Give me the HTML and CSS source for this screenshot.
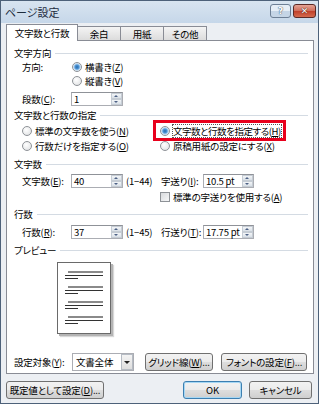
FILE: index.html
```html
<!DOCTYPE html>
<html>
<head>
    <meta charset="utf-8">
    <title>ページ設定</title>
    <link rel="stylesheet" href="styles.css">
</head>
<body>
<div class="window">
    <div class="titlebar">
        <span class="title">ページ設定</span>
        <div class="caption">
            <span class="cap help">?</span>
            <span class="cap close">✕</span>
        </div>
    </div>
    <div class="client">
        <div class="tabs">
            <span class="tab active">文字数と行数</span>
            <span class="tab">余白</span>
            <span class="tab">用紙</span>
            <span class="tab">その他</span>
        </div>
        <div class="panel">
            <div class="grp">文字方向</div>
            <div class="row">
                <span class="lbl">方向:</span>
                <span class="radio on"></span><span>横書き(<u>Z</u>)</span>
            </div>
            <div class="row">
                <span class="lbl"></span>
                <span class="radio"></span><span>縦書き(<u>V</u>)</span>
            </div>
            <div class="row r-cols">
                <span class="lbl">段数(<u>C</u>):</span>
                <span class="spin"><span class="val">1</span><span class="arrows"><i class="up"></i><i class="dn"></i></span></span>
            </div>

            <div class="grp g2">文字数と行数の指定</div>
            <div class="row r-radio1">
                <span class="col"><span class="radio"></span><span>標準の文字数を使う(<u>N</u>)</span></span>
                <span class="col"><span class="radio on"></span><span class="focus">文字数と行数を指定する(<u>H</u>)</span></span>
            </div>
            <div class="row r-radio2">
                <span class="col"><span class="radio"></span><span>行数だけを指定する(<u>O</u>)</span></span>
                <span class="col"><span class="radio"></span><span>原稿用紙の設定にする(<u>X</u>)</span></span>
            </div>
            <div class="mark"></div>

            <div class="grp g3">文字数</div>
            <div class="row r-num">
                <span class="lbl">文字数(<u>E</u>):</span>
                <span class="spin"><span class="val">40</span><span class="arrows"><i class="up"></i><i class="dn"></i></span></span>
                <span class="range">(1−44)</span>
                <span class="lbl2">字送り(<u>I</u>):</span>
                <span class="spin"><span class="val">10.5 pt</span><span class="arrows"><i class="up"></i><i class="dn"></i></span></span>
            </div>
            <div class="row r-check">
                <span class="check"></span><span>標準の字送りを使用する(<u>A</u>)</span>
            </div>

            <div class="grp g4">行数</div>
            <div class="row r-line">
                <span class="lbl">行数(<u>R</u>):</span>
                <span class="spin"><span class="val">37</span><span class="arrows"><i class="up"></i><i class="dn"></i></span></span>
                <span class="range">(1−45)</span>
                <span class="lbl2">行送り(<u>T</u>):</span>
                <span class="spin"><span class="val">17.75 pt</span><span class="arrows"><i class="up"></i><i class="dn"></i></span></span>
            </div>

            <div class="grp g5">プレビュー</div>
            <div class="preview">
                <div class="page">
                    <div class="para"><i class="l1"></i><i class="l2"></i><i class="l3"></i></div>
                    <div class="para"><i class="l1"></i><i class="l2"></i><i class="l3"></i></div>
                    <div class="para"><i class="l1"></i><i class="l2"></i><i class="l3"></i></div>
                    <div class="para"><i class="l1"></i><i class="l2"></i><i class="l3"></i></div>
                </div>
            </div>

            <div class="row r-target">
                <span class="lbl3">設定対象(<u>Y</u>):</span>
                <span class="combo"><span class="val">文書全体</span><span class="drop"></span></span>
                <span class="btn b-grid">グリッド線(<u>W</u>)...</span>
                <span class="btn b-font">フォントの設定(<u>F</u>)...</span>
            </div>
        </div>
        <div class="footer">
            <span class="btn b-default">既定値として設定(<u>D</u>)...</span>
            <span class="spacer"></span>
            <span class="btn b-ok">OK</span>
            <span class="btn b-cancel">キャンセル</span>
        </div>
    </div>
</div>
</body>
</html>
```

FILE: styles.css
```css
body {
    margin: 0;
    background: #ffffff;
    font-family: "Noto Sans CJK JP", "Liberation Sans", sans-serif;
    font-size: 9.5px;
    line-height: 12px;
    letter-spacing: -0.2px;
    font-feature-settings: "palt";
    white-space: nowrap;
    color: #000;
}

u {
    text-decoration: underline;
    text-underline-offset: 1px;
}

.window {
    width: 317px;
    height: 402px;
    border: 1px solid #4d6179;
    background: #e3eaf2;
    display: flex;
    flex-direction: column;
}

.titlebar {
    height: 22px;
    display: flex;
    align-items: center;
    padding-left: 4px;
    background: linear-gradient(#d8e4f0, #c6d7e9);
}

.title {
    font-size: 11px;
    letter-spacing: 0;
    color: #1c2b3d;
    flex: 1;
}

.caption {
    display: flex;
    gap: 2px;
    margin-right: 2px;
    align-self: flex-start;
    margin-top: 3px;
}

.cap {
    width: 21px;
    height: 14px;
    border: 1px solid #6d7f95;
    border-radius: 3px;
    display: flex;
    align-items: center;
    justify-content: center;
    font-family: "DejaVu Sans", sans-serif;
    font-size: 9px;
    font-weight: bold;
    box-sizing: border-box;
}

.help {
    background: linear-gradient(#e6eef6 50%, #c5d5e6 50%);
    color: #fff;
    text-shadow: 0 0 1px #3c4f66, 0 0 1px #3c4f66;
}

.close {
    width: 23px;
    border-color: #5b2a26;
    background: linear-gradient(#e5a395 0%, #cf6e5c 48%, #c0402a 52%, #d46a4e 100%);
    color: #fff;
    text-shadow: 0 0 1px #4a1a12, 0 0 1px #4a1a12;
}

.client {
    flex: 1;
    padding: 0 4px 0 5px;
    background: #eceff3;
    display: flex;
    flex-direction: column;
}

.tabs {
    height: 15px;
    margin-top: 2px;
    display: flex;
    align-items: flex-end;
    position: relative;
    z-index: 1;
}

.tab {
    height: 13px;
    width: 42px;
    border: 1px solid #898c95;
    border-bottom: none;
    border-left: none;
    background: linear-gradient(#f4f4f4, #dcdcdc);
    display: flex;
    align-items: center;
    justify-content: center;
}

.tab.active {
    width: 70px;
    height: 16px;
    margin-bottom: -1px;
    border-left: 1px solid #898c95;
    background: #fff;
}

.panel {
    height: 334px;
    box-sizing: border-box;
    border: 1px solid #898c95;
    background: #fff;
    padding: 5px 0 0 7px;
    display: flex;
    flex-direction: column;
    position: relative;
}

.grp {
    height: 14px;
    display: flex;
    align-items: center;
    gap: 4px;
    margin-right: 5px;
}

.grp::after {
    content: "";
    flex: 1;
    height: 1px;
    background: #d4dbe3;
}

.g2 { margin-top: 2px; }
.g3 { margin-top: 4px; }
.g4 { margin-top: 3px; }
.g5 { margin-top: 4px; }

.row {
    height: 14px;
    display: flex;
    align-items: center;
    padding-left: 8px;
}

.lbl {
    width: 49px;
    flex-shrink: 0;
}

.row .lbl + .radio {
    margin-left: 1px;
}

.radio {
    width: 10px;
    height: 10px;
    border: 1px solid #8e9297;
    border-radius: 50%;
    box-sizing: border-box;
    background: radial-gradient(circle at 40% 35%, #ffffff, #dcdee0);
    margin-right: 3px;
    flex-shrink: 0;
}

.radio.on {
    background: radial-gradient(circle, #2a6aa8 0, #4d96d8 2px, #a8cdee 3px, #eef3f7 4px);
}

.check {
    width: 10px;
    height: 10px;
    border: 1px solid #8e9297;
    box-sizing: border-box;
    background: linear-gradient(135deg, #d8dadd, #f6f7f8);
    margin-right: 3px;
}

.r-cols { margin-top: 4px; }

.spin {
    width: 52px;
    height: 14px;
    box-sizing: border-box;
    border: 1px solid #abadb3;
    border-top-color: #8f9298;
    display: flex;
    align-items: center;
    flex-shrink: 0;
}

.spin .val {
    flex: 1;
    padding-left: 2px;
}

.arrows {
    width: 11px;
    height: 12px;
    display: flex;
    flex-direction: column;
}

.arrows i {
    flex: 1;
    background: linear-gradient(#f3f5f7, #d9e0e7);
    border: 1px solid #c5ccd4;
    box-sizing: border-box;
    position: relative;
}

.arrows i::after {
    content: "";
    position: absolute;
    left: 2px;
    border-left: 2.5px solid transparent;
    border-right: 2.5px solid transparent;
}

.arrows .up::after {
    top: 1px;
    border-bottom: 2px solid #4d6185;
}

.arrows .dn::after {
    top: 1px;
    border-top: 2px solid #4d6185;
}

.r-radio1 {
    margin-top: 2px;
}

.r-radio2 {
    margin-top: 1px;
}

.col {
    display: flex;
    align-items: center;
}

.col:first-child {
    width: 138px;
}

.focus {
    outline: 1px dotted #555;
    letter-spacing: -0.45px;
}

.mark {
    position: absolute;
    left: 146px;
    top: 79px;
    width: 127px;
    height: 15px;
    border: 3px solid #e8001c;
}

.r-num { margin-top: 3px; }
.r-line { margin-top: 4px; }

.range {
    margin-left: 3px;
    width: 35px;
    flex-shrink: 0;
}

.lbl2 {
    width: 42px;
    flex-shrink: 0;
}

.r-num .spin:last-child,
.r-line .spin:last-child {
    width: 51px;
}

.r-check {
    margin-top: 2px;
    padding-left: 146px;
}

.preview {
    margin-top: 5px;
    padding-left: 43px;
}

.page {
    width: 54px;
    height: 72px;
    box-sizing: border-box;
    border: 1px solid #6a6a6a;
    background: #fff;
    box-shadow: 2px 2px 0 #b4b4b4, 3px 3px 1px #d8d8d8;
    padding: 8px 0 0 7px;
    display: flex;
    flex-direction: column;
    gap: 7px;
}

.para {
    display: flex;
    flex-direction: column;
    gap: 2px;
}

.para i {
    height: 1px;
    background: #333;
    width: 38px;
}

.para .l1 {
    margin-left: 3px;
    width: 35px;
    height: 2px;
    background: #8a8a8a;
}

.para .l3 {
    width: 13px;
}

.r-target {
    margin-top: 19px;
    height: 18px;
    padding-left: 0;
}

.lbl3 {
    width: 58px;
    flex-shrink: 0;
}

.combo {
    width: 62px;
    height: 18px;
    box-sizing: border-box;
    border: 1px solid #abadb3;
    display: flex;
    align-items: center;
    flex-shrink: 0;
}

.combo .val {
    flex: 1;
    padding-left: 3px;
}

.drop {
    width: 12px;
    height: 16px;
    box-sizing: border-box;
    border: 1px solid #b6bcc4;
    background: linear-gradient(#f4f4f4, #dedede);
    position: relative;
}

.drop::after {
    content: "";
    position: absolute;
    left: 2px;
    top: 6px;
    border-left: 3px solid transparent;
    border-right: 3px solid transparent;
    border-top: 3px solid #222;
}

.btn {
    height: 18px;
    box-sizing: border-box;
    border: 1px solid #707070;
    border-radius: 3px;
    background: linear-gradient(#f2f2f2 0%, #ebebeb 48%, #dddddd 52%, #cfcfcf 100%);
    display: flex;
    align-items: center;
    justify-content: center;
    flex-shrink: 0;
}

.b-grid {
    margin-left: 11px;
    width: 68px;
}

.b-font {
    margin-left: 8px;
    width: 86px;
}

.footer {
    margin-top: 7px;
    display: flex;
    align-items: center;
}

.spacer {
    flex: 1;
}

.b-default {
    width: 98px;
}

.b-ok {
    width: 59px;
    border-color: #3c7fb1;
    box-shadow: inset 0 0 0 1px #a6d7f4;
}

.b-cancel {
    width: 63px;
    margin-left: 7px;
    margin-right: 2px;
}
```
